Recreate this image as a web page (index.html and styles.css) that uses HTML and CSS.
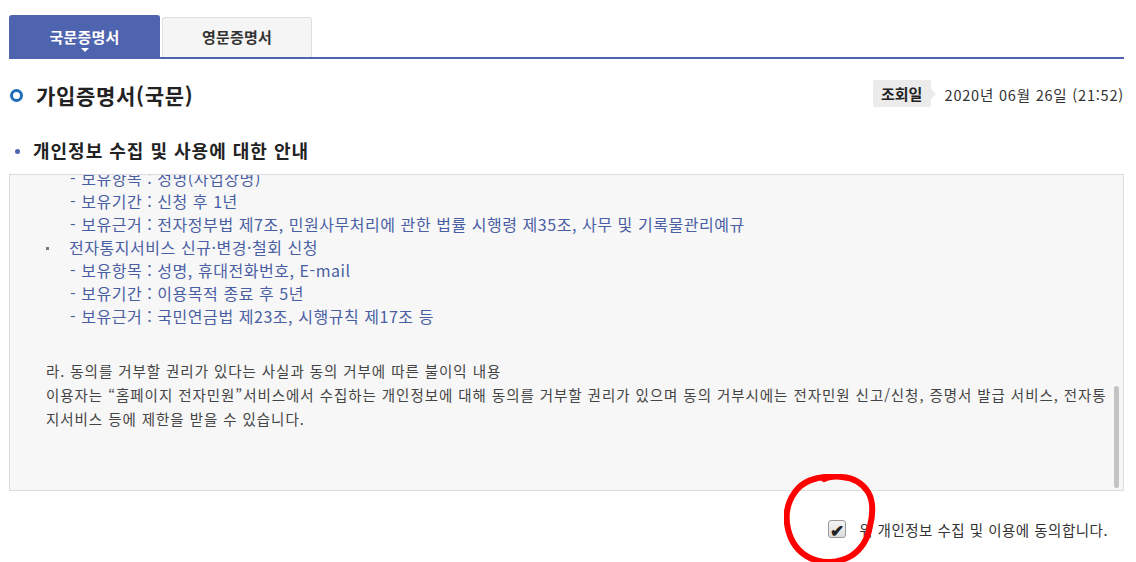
FILE: index.html
```html
<!DOCTYPE html>
<html lang="ko">
<head>
<meta charset="utf-8">
<link rel="stylesheet" href="styles.css">
</head>
<body>
<div class="page">
  <div class="tabs">
    <div class="tab tab-active">국문증명서<span class="caret"></span></div>
    <div class="tab">영문증명서</div>
  </div>

  <div class="title-row">
    <h1 class="title"><span class="ring"></span>가입증명서(국문)</h1>
    <div class="meta">
      <span class="badge">조회일</span>
      <span class="date">2020년 06월 26일 (21:52)</span>
    </div>
  </div>

  <h2 class="section"><span class="dot"></span>개인정보 수집 및 사용에 대한 안내</h2>

  <div class="box">
    <div class="box-inner">
      <p class="blue">- 보유항목 : 성명(사업장명)</p>
      <p class="blue">- 보유기간 : 신청 후 1년</p>
      <p class="blue">- 보유근거 : 전자정부법 제7조, 민원사무처리에 관한 법률 시행령 제35조, 사무 및 기록물관리예규</p>
      <p class="blue item"><span class="mark"></span>전자통지서비스 신규·변경·철회 신청</p>
      <p class="blue">- 보유항목 : 성명, 휴대전화번호, E-mail</p>
      <p class="blue">- 보유기간 : 이용목적 종료 후 5년</p>
      <p class="blue">- 보유근거 : 국민연금법 제23조, 시행규칙 제17조 등</p>
      <div class="para">
        <p>라. 동의를 거부할 권리가 있다는 사실과 동의 거부에 따른 불이익 내용</p>
        <p>이용자는 “홈페이지 전자민원”서비스에서 수집하는 개인정보에 대해 동의를 거부할 권리가 있으며 동의 거부시에는 전자민원 신고/신청, 증명서 발급 서비스, 전자통<br>지서비스 등에 제한을 받을 수 있습니다.</p>
      </div>
    </div>
    <span class="thumb"></span>
  </div>

  <div class="agree">
    <span class="check-wrap">
      <span class="check">✔</span>
      <svg class="scribble" width="96" height="92" viewBox="0 0 96 92" aria-hidden="true">
        <path d="M47 3 C32 2 18 8 11 18 C3 29 1 42 4 55 C7 68 14 78 26 84 C38 90 55 89 67 82 C78 75 84 64 86 52 C89 40 90 28 84 18 C79 10 70 4 58 3 C52 2 44 3 40 5" fill="none" stroke="#f00" stroke-width="6" stroke-linecap="round" stroke-linejoin="round"/>
      </svg>
    </span>
    <span class="agree-label">위 개인정보 수집 및 이용에 동의합니다.</span>
  </div>
</div>
</body>
</html>
```

FILE: styles.css
```css
* { box-sizing: border-box; }
html, body { margin: 0; padding: 0; background: #fff; }
body {
  font-family: "Noto Sans CJK KR", "Noto Sans", "Liberation Sans", sans-serif;
  color: #333;
  min-height: 562px;
}
p, h1, h2 { margin: 0; }

.page { padding: 15px 12px 40px 9px; }

.tabs {
  display: flex;
  align-items: flex-end;
  gap: 2px;
  border-bottom: 2px solid #4f64ae;
  height: 44px;
}
.tab {
  width: 150px;
  height: 40px;
  display: flex;
  align-items: center;
  justify-content: center;
  font-size: 15px;
  font-weight: 700;
  letter-spacing: 0.2px;
  color: #333;
  background: #f5f5f5;
  border: 1px solid #dedede;
  border-bottom: none;
  border-radius: 3px 3px 0 0;
  padding-bottom: 3px;
}
.tab-active {
  position: relative;
  width: 151px;
  height: 42px;
  background: #4f64ae;
  border-color: #4f64ae;
  color: #fff;
  padding-bottom: 1px;
}
.caret {
  position: absolute;
  left: 50%;
  bottom: 5px;
  margin-left: -4px;
  border-left: 4px solid transparent;
  border-right: 4px solid transparent;
  border-top: 4px solid #fff;
}

.title-row {
  margin-top: 21px;
  height: 27px;
  display: flex;
  justify-content: space-between;
  align-items: center;
}
.title {
  display: flex;
  align-items: center;
  font-size: 21px;
  font-weight: 700;
  letter-spacing: 0.7px;
  color: #222;
  line-height: 27px;
  padding-top: 3px;
}
.ring {
  width: 13px;
  height: 13px;
  border: 3px solid #1f6db8;
  border-radius: 50%;
  margin: 0 13px 0 1px;
}
.meta { display: flex; align-items: center; }
.badge {
  position: relative;
  width: 58px;
  height: 27px;
  background: #ebebeb;
  border-radius: 2px;
  font-size: 15px;
  font-weight: 700;
  color: #222;
  display: flex;
  align-items: center;
  justify-content: center;
  margin-right: 14px;
}
.badge::after {
  content: "";
  position: absolute;
  right: -5px;
  top: 50%;
  margin-top: -5px;
  border-top: 5px solid transparent;
  border-bottom: 5px solid transparent;
  border-left: 5px solid #ebebeb;
}
.date { font-size: 14.5px; letter-spacing: 0.8px; color: #333; padding-top: 1px; }

.section {
  margin-top: 31px;
  height: 24px;
  display: flex;
  align-items: center;
  font-size: 18px;
  font-weight: 700;
  letter-spacing: 1px;
  color: #222;
}
.dot {
  width: 5px;
  height: 5px;
  border-radius: 50%;
  background: #4f64ae;
  margin: 2px 13px 0 6px;
}

.box {
  position: relative;
  margin-top: 12px;
  height: 317px;
  background: #f7f7f7;
  border: 1px solid #dcdcdc;
  overflow: hidden;
}
.box-inner { margin-top: -8px; padding-left: 60px; }
.blue { color: #4a5ea4; font-size: 16px; line-height: 23px; letter-spacing: 0.55px; }
.item { margin-left: -24px; display: flex; align-items: center; }
.mark {
  display: inline-block;
  width: 3px;
  height: 3px;
  background: #777;
  margin: 2px 20px 0 0;
}
.para {
  margin-top: 31px;
  margin-left: -24px;
  font-size: 14.5px;
  letter-spacing: 0.95px;
  line-height: 24px;
  color: #444;
}
.thumb {
  position: absolute;
  right: 4px;
  top: 211px;
  width: 5px;
  height: 102px;
  border-radius: 3px;
  background: #c3c3c3;
}

.agree {
  margin-top: 29px;
  display: flex;
  justify-content: flex-end;
  align-items: center;
  padding-right: 16px;
  height: 18px;
}
.check-wrap { position: relative; width: 18px; height: 18px; margin-right: 13px; }
.check {
  display: flex;
  align-items: center;
  justify-content: center;
  width: 18px;
  height: 18px;
  border: 1px solid #9a9a9a;
  border-radius: 3px;
  background: linear-gradient(#f4f4f4, #dcdcdc);
  color: #222;
  font-size: 17px;
  font-weight: 700;
  line-height: 1;
}
.scribble { position: absolute; left: -44px; top: -46px; }
.agree-label { font-size: 14.5px; letter-spacing: 0.5px; color: #333; }
```
